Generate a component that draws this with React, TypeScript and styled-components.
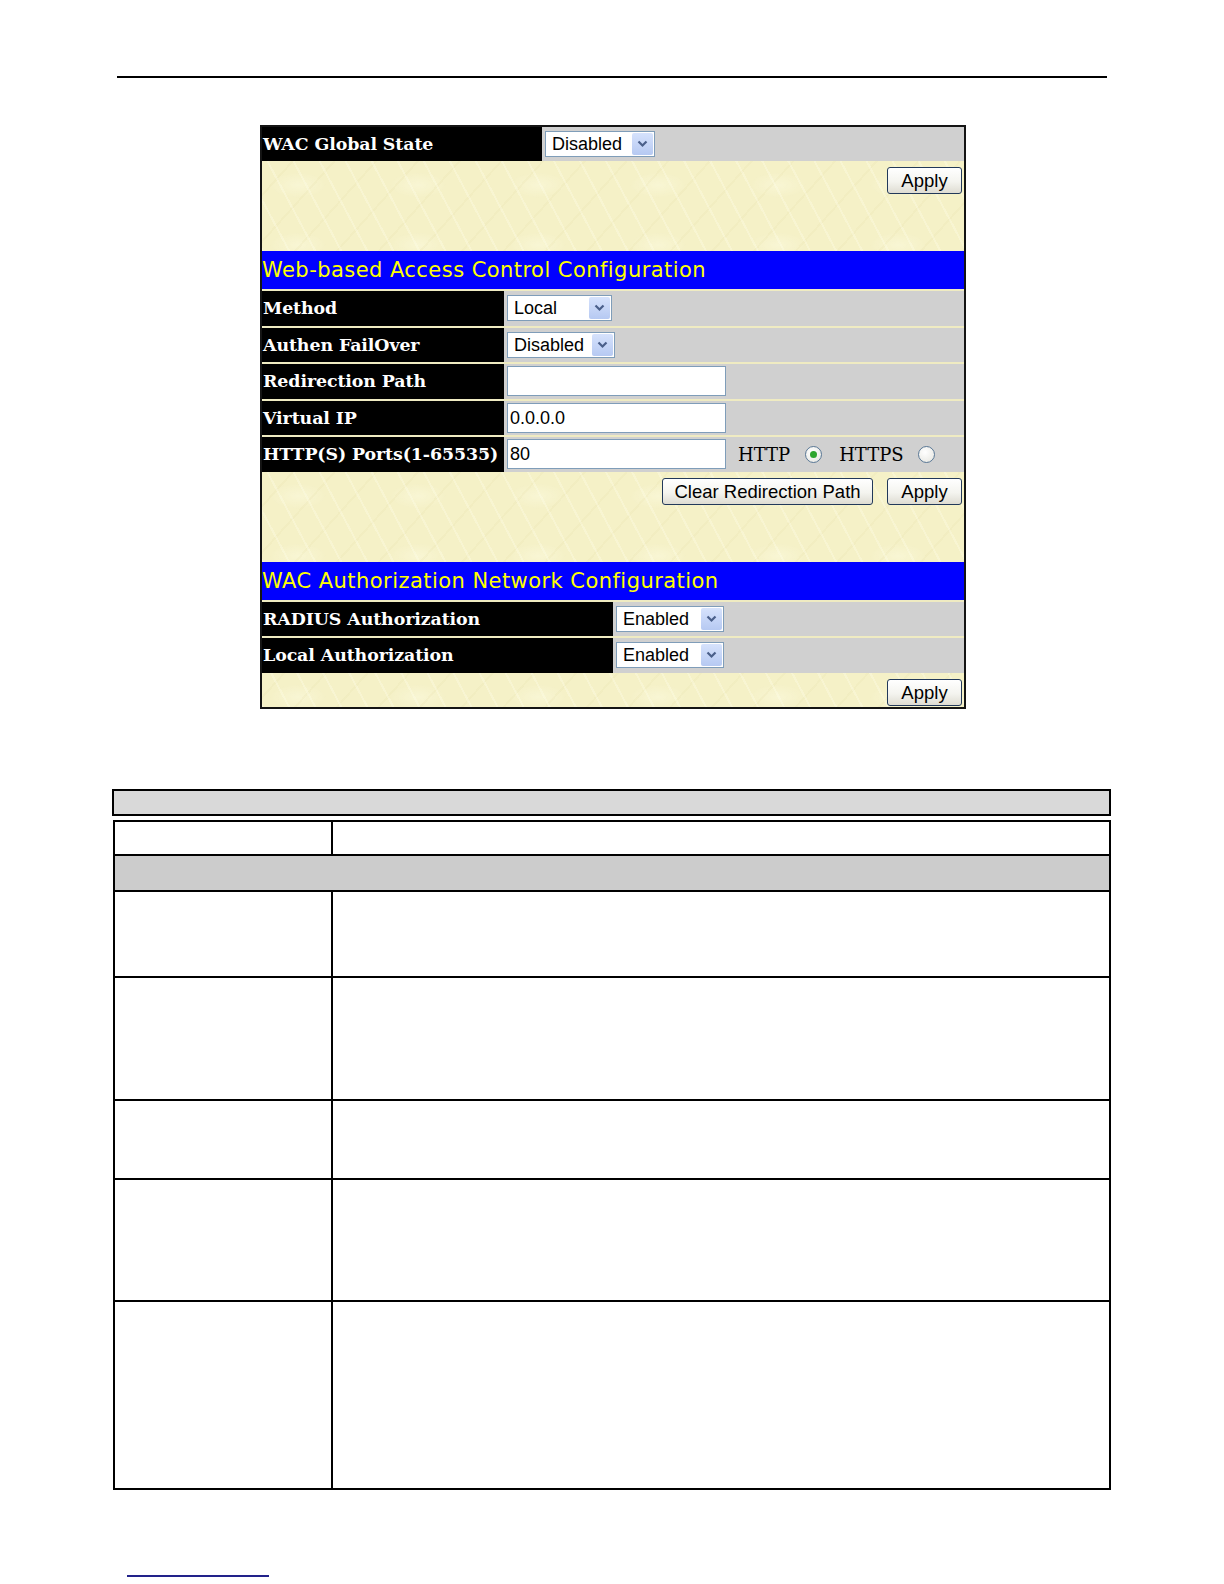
import React from "react";
import styled, { createGlobalStyle } from "styled-components";

const GlobalStyle = createGlobalStyle`
  html, body { margin: 0; padding: 0; background: #ffffff; }
  body { font-family: "Liberation Sans", Arial, sans-serif; }
  * { box-sizing: border-box; }
`;

const Page = styled.div`
  width: 1224px;
  min-height: 1584px;
  padding-top: 76px;
  display: flex;
  flex-direction: column;
`;

const TopRule = styled.div`
  margin-left: 117px;
  width: 990px;
  height: 2px;
  background: #000;
`;

const Panel = styled.div`
  margin: 47px 0 0 260px;
  width: 706px;
  border: 2px solid #141414;
  display: flex;
  flex-direction: column;
`;

const Row = styled.div<{ $label: number; $h: number; $sep?: boolean }>`
  display: grid;
  grid-template-columns: ${(p) => p.$label}px 1fr;
  height: ${(p) => p.$h}px;
  border-top: ${(p) => (p.$sep ? "2px solid #efebc2" : "none")};
`;

const Label = styled.div`
  background: #000;
  color: #fff;
  font-family: "DejaVu Serif", "Liberation Serif", serif;
  font-weight: bold;
  font-size: 17.4px;
  letter-spacing: -0.1px;
  display: flex;
  align-items: center;
  padding-left: 1px;
  white-space: nowrap;
`;

const Value = styled.div`
  background: #d0d0d0;
  display: flex;
  align-items: center;
  padding-left: 3px;
`;

const SectionTitle = styled.div`
  height: 38px;
  background: #0000ff;
  color: #ffff00;
  font-family: "DejaVu Sans", Verdana, sans-serif;
  font-size: 21px;
  letter-spacing: 0.45px;
  display: flex;
  align-items: center;
  padding-left: 0;
  white-space: nowrap;
`;

const ButtonBar = styled.div<{ $h: number }>`
  height: ${(p) => p.$h}px;
  display: flex;
  justify-content: flex-end;
  align-items: flex-start;
  gap: 14px;
  padding: 6px 2px 0 0;
  background-color: #f5f1c7;
  background-image:
    repeating-linear-gradient(62deg, rgba(255, 255, 236, 0.3) 0 2px, transparent 2px 23px),
    repeating-linear-gradient(-48deg, rgba(220, 211, 150, 0.12) 0 2px, transparent 2px 31px),
    radial-gradient(ellipse 40px 18px at 30% 40%, rgba(255, 255, 235, 0.35), transparent 70%);
  background-size: auto, auto, 120px 60px;
`;

const Btn = styled.button<{ $w: number }>`
  width: ${(p) => p.$w}px;
  height: 27px;
  border: 1px solid #22395a;
  border-radius: 3px;
  background: linear-gradient(#ffffff, #f4f4ef 55%, #dedcd2);
  font-family: "Liberation Sans", Arial, sans-serif;
  font-size: 18.5px;
  color: #000;
  padding: 0;
  line-height: 25px;
`;

const SelectBox = styled.div<{ $w: number }>`
  width: ${(p) => p.$w}px;
  height: 26px;
  border: 1px solid #7f9db9;
  background: #fff;
  display: flex;
  align-items: stretch;
  justify-content: space-between;
  padding: 1px;
`;

const SelectText = styled.span`
  font-family: "Liberation Sans", Arial, sans-serif;
  font-size: 18px;
  color: #000;
  padding-left: 5px;
  line-height: 22px;
  white-space: nowrap;
`;

const ArrowBtn = styled.span`
  width: 21px;
  background: linear-gradient(#d6e2fc, #b6c9f2);
  border-radius: 2px;
  display: flex;
  align-items: center;
  justify-content: center;
`;

const TextInput = styled.div`
  width: 219px;
  height: 30px;
  border: 1px solid #7f9db9;
  background: #fff;
  font-family: "Liberation Sans", Arial, sans-serif;
  font-size: 18px;
  color: #000;
  padding-left: 2px;
  line-height: 28px;
`;

const OptText = styled.span<{ $ml: number }>`
  margin-left: ${(p) => p.$ml}px;
  font-family: "DejaVu Serif", "Liberation Serif", serif;
  font-size: 18px;
  color: #000;
`;

const Radio = styled.span<{ $ml: number; $on?: boolean }>`
  margin-left: ${(p) => p.$ml}px;
  width: 17px;
  height: 17px;
  border-radius: 50%;
  border: 1px solid #5a7896;
  background: radial-gradient(circle at 40% 35%, #ffffff, #e4e4de);
  display: inline-flex;
  align-items: center;
  justify-content: center;
  &::after {
    content: "";
    width: 7px;
    height: 7px;
    border-radius: 50%;
    background: ${(p) => (p.$on ? "#2ea52e" : "transparent")};
  }
`;

const InfoHeader = styled.div`
  margin: 80px 0 0 112px;
  width: 999px;
  height: 27px;
  border: 2px solid #000;
  background: #d9d9d9;
`;

const InfoGrid = styled.div`
  margin: 4px 0 0 113px;
  width: 998px;
  display: grid;
  grid-template-columns: 218px 1fr;
  border-left: 2px solid #000;
  border-top: 2px solid #000;
`;

const Cell = styled.div<{ $h: number; $span?: boolean; $gray?: boolean }>`
  height: ${(p) => p.$h}px;
  grid-column: ${(p) => (p.$span ? "1 / -1" : "auto")};
  background: ${(p) => (p.$gray ? "#cccccc" : "#ffffff")};
  border-right: 2px solid #000;
  border-bottom: 2px solid #000;
`;

const FooterLink = styled.div`
  margin: 85px 0 0 127px;
  width: 142px;
  height: 1.5px;
  background: #22228a;
`;

const Chevron = () => (
  <svg width="11" height="8" viewBox="0 0 11 8">
    <path d="M1.5 1.5 L5.5 5.5 L9.5 1.5" fill="none" stroke="#4a5f8a" strokeWidth="2.2" />
  </svg>
);

const Select = ({ value, width }: { value: string; width: number }) => (
  <SelectBox $w={width}>
    <SelectText>{value}</SelectText>
    <ArrowBtn>
      <Chevron />
    </ArrowBtn>
  </SelectBox>
);

const bodyRows = [86, 123, 79, 122, 188];

export default function App() {
  return (
    <Page>
      <GlobalStyle />
      <TopRule />
      <Panel>
        <Row $label={280} $h={34}>
          <Label>WAC Global State</Label>
          <Value>
            <Select value="Disabled" width={110} />
          </Value>
        </Row>
        <ButtonBar $h={90}>
          <Btn $w={75}>Apply</Btn>
        </ButtonBar>
        <SectionTitle>Web-based Access Control Configuration</SectionTitle>
        <Row $label={242} $h={36.5} $sep>
          <Label>Method</Label>
          <Value>
            <Select value="Local" width={105} />
          </Value>
        </Row>
        <Row $label={242} $h={36.5} $sep>
          <Label>Authen FailOver</Label>
          <Value>
            <Select value="Disabled" width={108} />
          </Value>
        </Row>
        <Row $label={242} $h={36.5} $sep>
          <Label>Redirection Path</Label>
          <Value>
            <TextInput />
          </Value>
        </Row>
        <Row $label={242} $h={36.5} $sep>
          <Label>Virtual IP</Label>
          <Value>
            <TextInput>0.0.0.0</TextInput>
          </Value>
        </Row>
        <Row $label={242} $h={36.5} $sep>
          <Label>HTTP(S) Ports(1-65535)</Label>
          <Value>
            <TextInput>80</TextInput>
            <OptText $ml={12}>HTTP</OptText>
            <Radio $ml={15} $on />
            <OptText $ml={17}>HTTPS</OptText>
            <Radio $ml={14} />
          </Value>
        </Row>
        <ButtonBar $h={90}>
          <Btn $w={211}>Clear Redirection Path</Btn>
          <Btn $w={75}>Apply</Btn>
        </ButtonBar>
        <SectionTitle>WAC Authorization Network Configuration</SectionTitle>
        <Row $label={351} $h={36.5} $sep>
          <Label>RADIUS Authorization</Label>
          <Value>
            <Select value="Enabled" width={108} />
          </Value>
        </Row>
        <Row $label={351} $h={36.5} $sep>
          <Label>Local Authorization</Label>
          <Value>
            <Select value="Enabled" width={108} />
          </Value>
        </Row>
        <ButtonBar $h={34.5}>
          <Btn $w={75}>Apply</Btn>
        </ButtonBar>
      </Panel>

      <InfoHeader />
      <InfoGrid>
        <Cell $h={34} />
        <Cell $h={34} />
        <Cell $h={36} $span $gray />
        {bodyRows.map((h, i) => (
          <React.Fragment key={i}>
            <Cell $h={h} />
            <Cell $h={h} />
          </React.Fragment>
        ))}
      </InfoGrid>
      <FooterLink />
    </Page>
  );
}
